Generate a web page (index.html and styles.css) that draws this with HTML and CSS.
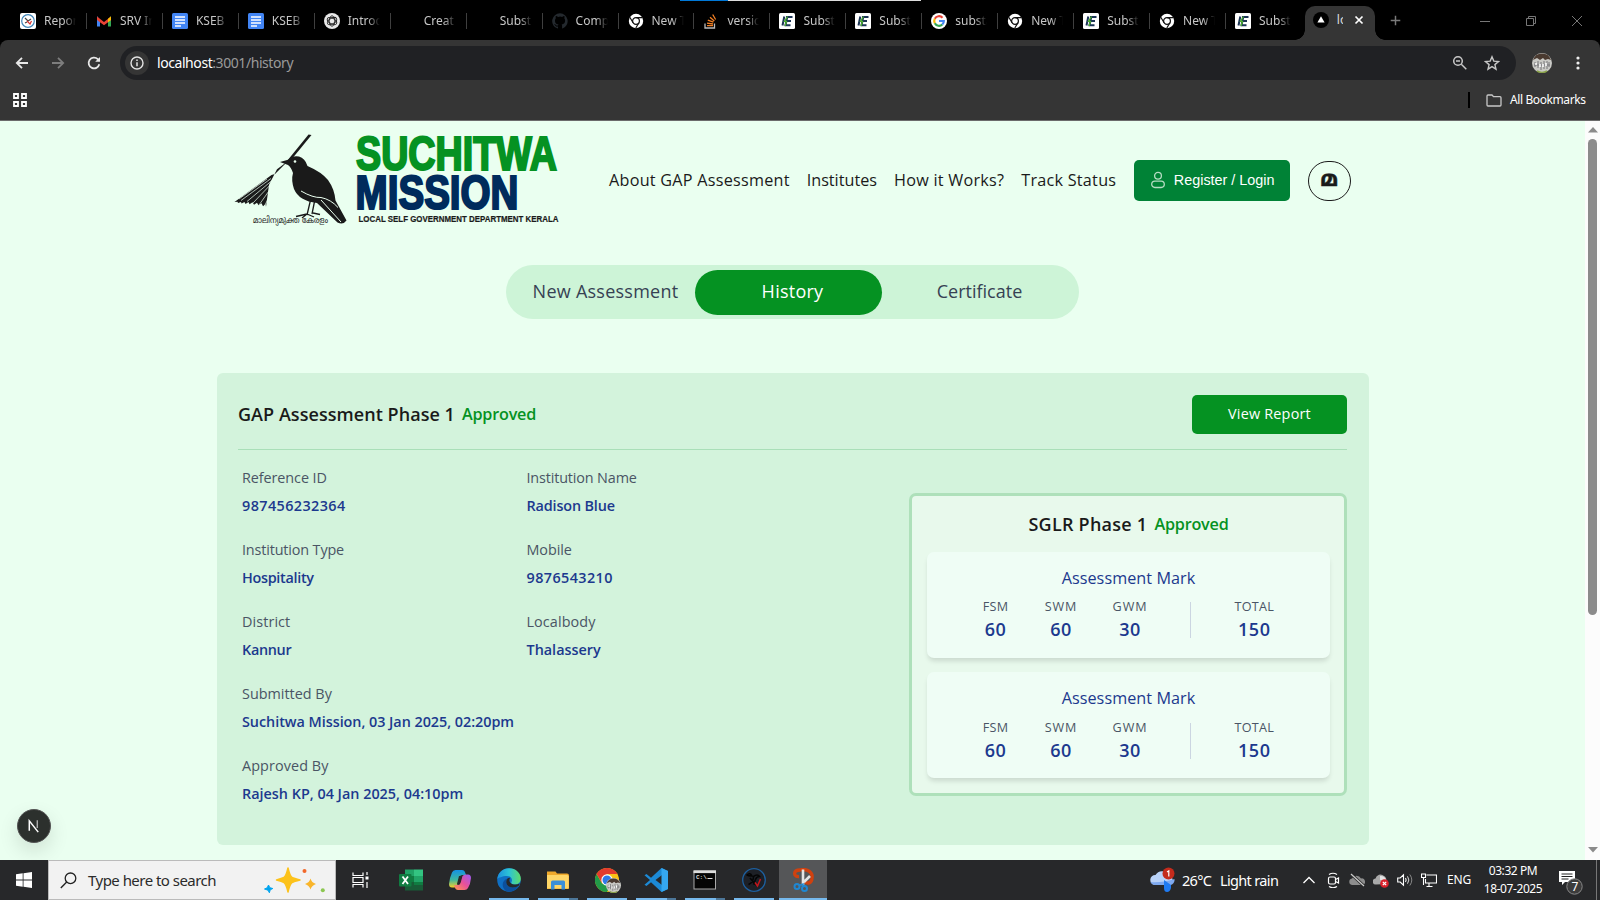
FILE: index.html
```html
<!DOCTYPE html>
<html lang="en">
<head>
<meta charset="utf-8">
<title>GAP Assessment History</title>
<link rel="stylesheet" href="styles.css">
</head>
<body>
<svg class="defs" width="0" height="0">
  <symbol id="docs" viewBox="0 0 16 16"><rect width="16" height="16" rx="1.5" fill="#4285f4"/><path d="M3 4h10M3 7h10M3 10h10M3 13h6" stroke="#fff" stroke-width="1.5"/></symbol>
  <symbol id="chrome-mono" viewBox="0 0 16 16"><circle cx="8" cy="8" r="7.2" fill="#fff"/><circle cx="8" cy="8" r="3.4" fill="none" stroke="#111" stroke-width="1.2"/><path d="M8 4.6h6.4M5.1 9.7 1.8 4.3M10.9 9.7 7.8 15" stroke="#111" stroke-width="1.2"/></symbol>
  <symbol id="ie" viewBox="0 0 16 16"><rect width="16" height="16" rx="1.5" fill="#fff"/><path d="M5.300 3.500 3.500 12.500M7 4h6.500M6.800 8h5.200M5.500 12.200h6M8.300 3.500 6.500 12.500" stroke="#1d3557" stroke-width="2" fill="none"/><path d="M8.500 3.500 5.500 8.300h2L6 13" stroke="#4caf2f" stroke-width="1.300" fill="none"/></symbol>
  <symbol id="face" viewBox="0 0 20 20"><circle cx="10" cy="10" r="10" fill="#c9c9c5"/><path d="M1 7a9.500 9.500 0 0 1 18 0l-3-1-3 1-2-2-3 2-3-2z" fill="#4a3a30"/><path d="M3 9v5m3-6v7m3-6v8m3-9v8m3-8v8m2-7v5M2 12h16" stroke="#77777a" stroke-width="1"/><path d="M4 10v2m4-1v3m3-3v3m3-4v3" stroke="#fff" stroke-width="1.500"/><path d="M5 18q5 3 10 0" stroke="#8aa34a" stroke-width="1.500" fill="none"/></symbol>
</svg>

<div class="tabstrip">
  <div class="top-progress"></div>
  <div class="tab"><svg viewBox="0 0 16 16"><rect width="16" height="16" rx="2" fill="#fff"/><circle cx="8" cy="8" r="6.300" fill="none" stroke="#3f84b8" stroke-width="1.200"/><path d="m5 5 3 3 3-2M5 10l2-1" stroke="#444" stroke-width="1.200" fill="none"/><path d="m7 8 3 3 1.500-3" stroke="#d33" stroke-width="1.200" fill="none"/></svg><span>Repor</span></div>
  <div class="tab"><svg viewBox="0 0 16 16"><path d="M1 3v10.500h3V7z" fill="#4285f4"/><path d="M12 7v6.500h3V3z" fill="#34a853"/><path d="M1 3.500 8 9l7-5.500V7l-7 5.300L1 7z" fill="#ea4335"/><path d="M12 5.800 15 3.500V7l-3 2.300z" fill="#fbbc04"/></svg><span>SRV In</span></div>
  <div class="tab"><svg><use href="#docs"/></svg><span>KSEB</span></div>
  <div class="tab"><svg><use href="#docs"/></svg><span>KSEB</span></div>
  <div class="tab"><svg viewBox="0 0 16 16"><circle cx="8" cy="8" r="8" fill="#e8e8e8"/><g fill="none" stroke="#222" stroke-width=".9"><ellipse cx="8" cy="8" rx="2.800" ry="5.200"/><ellipse cx="8" cy="8" rx="2.800" ry="5.200" transform="rotate(60 8 8)"/><ellipse cx="8" cy="8" rx="2.800" ry="5.200" transform="rotate(120 8 8)"/></g></svg><span>Introd</span></div>
  <div class="tab"><i class="no-icon"></i><span>Creat</span></div>
  <div class="tab"><i class="no-icon"></i><span>Subst</span></div>
  <div class="tab"><svg viewBox="0 0 16 16"><path d="M8 .3a7.800 7.800 0 0 0-2.500 15.200c.4 0 .5-.2.5-.4v-1.500c-2.200.5-2.700-1-2.700-1-.4-.9-.9-1.200-.9-1.200-.7-.5.1-.5.1-.5.8.1 1.200.8 1.200.8.7 1.200 1.900.9 2.300.7 0-.6.300-.9.500-1.100C4.700 11.100 3 10.500 3 7.400c0-.9.300-1.600.8-2.100 0-.3-.4-1.100.1-2.200 0 0 .7-.2 2.200.8a7.400 7.400 0 0 1 4 0c1.500-1 2.200-.8 2.200-.8.400 1.100.1 1.900 0 2.200.5.500.8 1.200.8 2.100 0 3-1.700 3.700-3.500 3.900.3.200.5.700.5 1.500v2.200c0 .2.100.5.500.4A7.800 7.800 0 0 0 8 .3z" fill="#24292e"/></svg><span>Comp</span></div>
  <div class="tab"><svg><use href="#chrome-mono"/></svg><span>New T</span></div>
  <div class="tab"><svg viewBox="0 0 16 16"><path d="M2 10.500V15h9.500v-4.500" fill="none" stroke="#bbb" stroke-width="1.300"/><path d="M4 12.700h6M4 10.200l6 .8M4.800 7.200l5.600 1.900M7 4.300l4.300 3.800M9.700 1.500l2.900 5" stroke="#f48024" stroke-width="1.300"/></svg><span>versic</span></div>
  <div class="tab"><svg><use href="#ie"/></svg><span>Subst</span></div>
  <div class="tab"><svg><use href="#ie"/></svg><span>Subst</span></div>
  <div class="tab"><svg viewBox="0 0 16 16"><circle cx="8" cy="8" r="8" fill="#fff"/><g fill="none" stroke-width="2.200"><path d="M11.500 4.700A4.800 4.800 0 0 0 3.800 5.700" stroke="#ea4335"/><path d="M3.800 5.700a4.800 4.800 0 0 0 0 4.600" stroke="#fbbc05"/><path d="M3.800 10.300a4.800 4.800 0 0 0 7.500 1.200" stroke="#34a853"/><path d="M11.300 11.500A4.500 4.500 0 0 0 12.800 8H8" stroke="#4285f4"/></g></svg><span>substa</span></div>
  <div class="tab"><svg><use href="#chrome-mono"/></svg><span>New T</span></div>
  <div class="tab"><svg><use href="#ie"/></svg><span>Subst</span></div>
  <div class="tab"><svg><use href="#chrome-mono"/></svg><span>New T</span></div>
  <div class="tab last"><svg><use href="#ie"/></svg><span>Subst</span></div>
  <div class="tab-active"><svg viewBox="0 0 16 16"><circle cx="8" cy="8" r="8" fill="#000"/><path d="m8 4.300 3.600 6.200H4.400z" fill="#fff"/></svg><span>lo</span><svg class="close" viewBox="0 0 10 10"><path d="m1.500 1.500 7 7m0-7-7 7" stroke="#fff" stroke-width="1.700"/></svg></div>
  <svg class="plus" viewBox="0 0 12 12"><path d="M6 .8v10.400M.8 6h10.400" stroke="#7a7a7a" stroke-width="1.600"/></svg>
  <div class="winctl">
    <svg viewBox="0 0 12 12"><path d="M1 6.500h10" stroke="#777"/></svg>
    <svg viewBox="0 0 12 12"><path d="M1.500 3.500h7v7h-7zM3.500 3.500v-2h7v7h-2" fill="none" stroke="#777"/></svg>
    <svg viewBox="0 0 12 12"><path d="m1 1 10 10M11 1 1 11" stroke="#777"/></svg>
  </div>
</div>

<div class="toolbar">
  <div class="address-row">
    <div class="navbtns">
      <svg viewBox="0 0 16 16"><path d="M14 8H3M8 2.800 2.800 8 8 13.200" fill="none" stroke="#e8e8e8" stroke-width="1.800"/></svg>
      <svg viewBox="0 0 16 16"><path d="M2 8h11M8 2.800 13.200 8 8 13.200" fill="none" stroke="#7d7d7d" stroke-width="1.800"/></svg>
      <svg viewBox="0 0 16 16"><path d="M13.300 9.300a5.400 5.400 0 1 1-1.500-5.200l1.500 1.500" fill="none" stroke="#e8e8e8" stroke-width="1.800"/><path d="M14 2v4.800H9.200z" fill="#e8e8e8"/></svg>
    </div>
    <div class="omnibox">
      <span class="info"><svg viewBox="0 0 14 14"><circle cx="7" cy="7" r="6" fill="none" stroke="#e3e3e3" stroke-width="1.400"/><path d="M7 6.300v4M7 3.500v1.500" stroke="#e3e3e3" stroke-width="1.500"/></svg></span>
      <span class="url"><b>localhost</b>:3001/history</span>
      <span class="omni-icons">
        <svg viewBox="0 0 16 16"><circle cx="6" cy="6" r="4.300" fill="none" stroke="#c7c7c7" stroke-width="1.500"/><path d="m9.300 9.300 5 5M4 6h4" stroke="#c7c7c7" stroke-width="1.500"/></svg>
        <svg viewBox="0 0 16 16"><path d="m8 1.800 1.800 4.300 4.700.4-3.600 3.100 1.100 4.600L8 11.700l-4 2.500 1.100-4.600L1.500 6.500l4.700-.4z" fill="none" stroke="#c7c7c7" stroke-width="1.400"/></svg>
      </span>
    </div>
    <svg class="avatar"><use href="#face"/></svg>
    <svg class="dots" viewBox="0 0 4 16"><g fill="#eee"><circle cx="2" cy="3" r="1.600"/><circle cx="2" cy="8" r="1.600"/><circle cx="2" cy="13" r="1.600"/></g></svg>
  </div>
  <div class="bookmarks">
    <svg class="apps" viewBox="0 0 14 14"><path d="M1 1h4v4H1zM9 1h4v4H9zM1 9h4v4H1zM9 9h4v4H9z" fill="none" stroke="#fff" stroke-width="1.800"/></svg>
    <i class="bm-div"></i>
    <svg class="folder" viewBox="0 0 16 13"><path d="M1 2q0-1 1-1h4l1.500 1.700H14q1 0 1 1V11q0 1-1 1H2q-1 0-1-1z" fill="none" stroke="#c7c7c7" stroke-width="1.300"/></svg>
    <span class="bm-text">All Bookmarks</span>
  </div>
</div>

<div class="viewport">
  <main class="page">
    <header class="site-header">
      <svg class="logo" viewBox="0 0 330 96" role="img">
        <g transform="translate(-1 0)">
        <path d="m75.500 2.500 3 .5-22.500 27.500-2-1.500z" fill="#1a1a1a"/>
        <path d="M55 29 42 42 38.500 43 1.500 70l3-.2.500 1.200 3-1 .5 1.500 3-1.500 1 2 3-2 1 2.300 3-2 1.500 2.500 3-2 1.500 2.500 3-2 1.500 3 2.500-2 .5 2.500 3-22 8-15.500z" fill="#1a1a1a"/>
        <path d="m8 68.500 30-22M14 69.500l25-21M20 71l21-22M26 73l17-24M31 75l13-26M6 67l28-20" stroke="#ebfff0" stroke-width=".7"/>
        <path d="m47 30 8-2.200q5-4.800 11-3.300 6 1.500 8.500 9.500 14 6 20.500 14 6.500 9 7.500 20.500l11 20q-3 4.500-9 2L84 71q-18-2-23-14-3-9-1-16-2-6-5-8z" fill="#1a1a1a"/>
        <circle cx="62" cy="29.500" r="1.300" fill="#ebfff0"/>
        <path d="M68 59q12 7 20 6.500 10 2 17 10M88 68l20 22" stroke="#ebfff0" fill="none" stroke-width="1"/>
        <path d="m78 66-4 17m8-16-3 15M74 82l-11 2.500m11-2.500-5 4m5-4 7 3m-1-4 7 1.500" stroke="#1a1a1a" stroke-width="1.300" fill="none"/>
        </g>
        <text class="logo-ml" x="19" y="91" textLength="75" lengthAdjust="spacingAndGlyphs">മാലിന്യമുക്ത കേരളം</text>
        <text class="logo-a" x="122" y="37.500" textLength="201" lengthAdjust="spacingAndGlyphs">SUCHITWA</text>
        <text class="logo-b" x="121.500" y="76.500" textLength="163" lengthAdjust="spacingAndGlyphs">MISSION</text>
        <text class="logo-c" x="124.500" y="89.500" textLength="200" lengthAdjust="spacingAndGlyphs">LOCAL SELF GOVERNMENT DEPARTMENT KERALA</text>
      </svg>
      <nav class="menu">
        <a class="p3">About GAP Assessment</a><a>Institutes</a><a class="p3">How it Works?</a><a class="p3">Track Status</a>
      </nav>
      <button class="login"><svg viewBox="0 0 16 18"><circle cx="8" cy="4.800" r="3.400" fill="none" stroke="#b5dcc2" stroke-width="1.300"/><rect x="1.700" y="10.200" width="12.600" height="6.300" rx="3.200" fill="none" stroke="#b5dcc2" stroke-width="1.300"/></svg><span>Register / Login</span></button>
      <button class="lang">മ</button>
    </header>
    <div class="switcher">
      <span class="p3">New Assessment</span><span class="on p3">History</span><span>Certificate</span>
    </div>
    <section class="card">
      <div class="card-head">
        <h2>GAP Assessment Phase 1</h2><em>Approved</em>
        <button class="view">View Report</button>
      </div>
      <div class="card-body">
        <dl class="fields">
          <div><dt class="n1">Reference ID</dt><dd class="p4">987456232364</dd></div>
          <div><dt class="n2">Institution Name</dt><dd class="n2">Radison Blue</dd></div>
          <div><dt class="n2">Institution Type</dt><dd class="n3">Hospitality</dd></div>
          <div><dt class="n1">Mobile</dt><dd class="p4">9876543210</dd></div>
          <div><dt class="p1">District</dt><dd class="n3">Kannur</dd></div>
          <div><dt class="p1">Localbody</dt><dd>Thalassery</dd></div>
          <div class="wide"><dt>Submitted By</dt><dd class="n0">Suchitwa Mission, 03 Jan 2025, 02:20pm</dd></div>
          <div class="wide"><dt class="p1">Approved By</dt><dd>Rajesh KP, 04 Jan 2025, 04:10pm</dd></div>
        </dl>
        <aside class="sglr">
          <div class="sglr-head"><h3 class="p3">SGLR Phase 1</h3><em>Approved</em></div>
          <div class="marks">
            <h4>Assessment Mark</h4>
            <div class="scores"><p class="fsm"><small>FSM</small><b>60</b></p><p class="swm"><small>SWM</small><b>60</b></p><p class="gwm"><small>GWM</small><b>30</b></p><i></i><p class="total"><small>TOTAL</small><b>150</b></p></div>
          </div>
          <div class="marks second">
            <h4>Assessment Mark</h4>
            <div class="scores"><p class="fsm"><small>FSM</small><b>60</b></p><p class="swm"><small>SWM</small><b>60</b></p><p class="gwm"><small>GWM</small><b>30</b></p><i></i><p class="total"><small>TOTAL</small><b>150</b></p></div>
          </div>
        </aside>
      </div>
    </section>
    <div class="next-badge"><svg viewBox="0 0 34 34"><path d="M12 22V11.500l9.500 12" stroke="#fff" stroke-width="1.600" fill="none"/><path d="M20.500 11v8" stroke="#aaa" stroke-width="1.500"/></svg></div>
  </main>
  <div class="scrollbar"><svg viewBox="0 0 10 6"><path d="m5 0 5 5.500H0z"/></svg><i></i><svg class="down" viewBox="0 0 10 6"><path d="m5 5.500 5-5.500H0z"/></svg></div>
</div>

<div class="taskbar">
  <div class="start"><svg viewBox="0 0 16 16" fill="#fff"><path d="M0 2.200 6.700 1.300v6.300H0zM7.500 1.200 16 0v7.600H7.500zM0 8.400h6.700v6.300L0 13.800zM7.500 8.400H16V16l-8.500-1.200z"/></svg></div>
  <div class="search">
    <svg class="mag" viewBox="0 0 17 17"><circle cx="10.500" cy="6.300" r="5.300" fill="none" stroke="#222" stroke-width="1.300"/><path d="M6.700 10.100.8 16" stroke="#222" stroke-width="1.400"/></svg>
    <span>Type here to search</span>
    <svg class="spark" viewBox="0 0 62 26"><path d="M24 1q2 8.500 4 9.500t8 2.500q-6 1.500-8 2.500T24 25q-2-8.500-4-9.500T12.500 13q5.500-1.500 7.500-2.500T24 1z" fill="#fcc21b" stroke="#fcc21b" stroke-width="1.500" stroke-linejoin="round"/><path d="M46.500 11.500q1 4 5.500 5.500-4.500 1.500-5.500 5.500-1-4-5.500-5.500 4.500-1.500 5.500-5.500z" fill="#f9b52b"/><path d="m4.500 18 1.300 2.700 3 .8-2.600 1.300-.8 3-1.400-2.600L.5 22l2.700-1.200z" fill="#00a4ef" stroke="#00a4ef"/><circle cx="40.500" cy="4" r="2" fill="#f2682a"/><circle cx="58.800" cy="23.300" r="2" fill="#8cc751"/></svg>
  </div>
  <div class="app nob"><svg viewBox="0 0 24 24"><path d="M4 4.500v3h10v-3M4 19.500v-3h10v3M4 9.500h10v5H4zM18 4v3M18 14v6" fill="none" stroke="#fff" stroke-width="1.200"/><path d="M16.500 8.500h3v3h-3z" fill="#fff"/></svg></div>
  <div class="app nob first"><svg viewBox="0 0 24 24"><path d="M6 1.500h9V9H6z" fill="#21a366"/><path d="M15 1.500h9V9h-9z" fill="#33c481"/><path d="M6 8h9v8H6z" fill="#107c41"/><path d="M15 8h9v6h-9z" fill="#21a366"/><path d="M6 14h18v8.500H6z" fill="#185c37"/><path d="M15 14h9v3h-9z" fill="#107c41"/><rect y="6" width="12.500" height="12.500" rx="1" fill="#107c41"/><path d="m3.500 8.500 5.500 7.500M9 8.500 3.500 16" stroke="#fff" stroke-width="1.800"/></svg></div>
  <div class="app nob"><svg viewBox="0 0 24 24"><defs><linearGradient id="c1" x1="0" y1="0" x2="0" y2="1"><stop stop-color="#1391e6"/><stop offset=".55" stop-color="#3cb7a0"/><stop offset="1" stop-color="#f5d02a"/></linearGradient><linearGradient id="c2" x1="1" y1="0" x2="0" y2="1"><stop stop-color="#9a5cf5"/><stop offset=".5" stop-color="#e8509a"/><stop offset="1" stop-color="#ff9a4d"/></linearGradient></defs><path d="M7.500 2H14q2.500 0 3.300 3l.7 2h-4q-2 0-2.700 2.500L9.500 16q-1 3.500-3.500 3.500H4Q1 19.500 1 16q.5-6 3-11.500Q5 2 7.500 2z" fill="url(#c1)"/><path d="M16.500 22H10q-2.500 0-3.300-3L6 17h4q2 0 2.700-2.500L14.500 8q1-1.500 3.500-1.500h2q3 0 3 3.500-.5 6-3 10-1 2-3.500 2z" fill="url(#c2)"/><path d="m11 8-2 8h2.500l2.500-8z" fill="#2a2a2a"/></svg></div>
  <div class="app"><svg viewBox="0 0 24 24"><defs><linearGradient id="e1"><stop stop-color="#1b8fdd"/><stop offset=".5" stop-color="#2cc3d6"/><stop offset="1" stop-color="#5fdc6a"/></linearGradient></defs><circle cx="12" cy="12" r="11.800" fill="#0f6fc4"/><path d="M.3 11C1 4.500 6 .2 12 .2c7 0 11.800 5 11.800 10.300 0 4-3 6-6 6-2.500 0-4-1-3.500-2 2-3-.5-6.500-4.500-6.500C5 8 1.500 10 .3 11z" fill="url(#e1)"/><path d="M8.500 22.700C4 19 5 12 10.500 10.500c-3 3.500-.5 9 5 9 2.500 0 4.500-.7 6.500-2-2.500 5-8 7.500-13.500 5.200z" fill="#0c4f9c"/><path d="M22 17.500c-1.500 1-4 2-6.500 2-5.500 0-8-5.500-5-9 .8-.6 2-.8 2.500-.5-1.500 3 0 6 4 6.500 2 .3 4 0 5.700-1z" fill="#27282a"/></svg></div>
  <div class="app multi"><svg viewBox="0 0 24 24"><path d="M1 3.500h8.500l1.500 2H21q2 0 2 2V20q0 1-1 1H1z" fill="#f0a92b"/><path d="M1 7h20q1.700 0 1.700 1.500V20.500H1z" fill="#ffd667"/><path d="M5 21.500V14q0-1.500 1.500-1.500h11Q19 12.500 19 14v7.500h-3.500v-4.500h-7v4.500z" fill="#3b8fd8"/></svg></div>
  <div class="app"><svg viewBox="0 0 24 24"><circle cx="12" cy="12" r="12" fill="#fbc116"/><path d="M1.600 6A12 12 0 0 0 12 24l5-9-10 .5z" fill="#229a48"/><path d="M1.600 6 7 15l5-9h10.400A12 12 0 0 0 1.600 6z" fill="#e33b2e"/><circle cx="12" cy="12" r="5.700" fill="#fff"/><circle cx="12" cy="12" r="4.500" fill="#2f79e8"/></svg><svg class="mini" viewBox="0 0 20 20"><use href="#face" width="20" height="20"/></svg></div>
  <div class="app multi"><svg viewBox="0 0 24 24"><path d="m17.500 0 6.500 3v18l-6.500 3L7 14.200 2.500 18 .5 16.800 6 12 .5 7.200 2.500 6 7 9.800zM18 7l-6.500 5 6.500 5z" fill="#1c8ad6" fill-rule="evenodd"/><path d="m17.500 0 6.500 3v18l-6.500 3z" fill="#35a7f0"/></svg></div>
  <div class="app multi"><svg viewBox="0 0 24 24"><rect x="1" y="2.500" width="21.500" height="18.500" fill="#050505" stroke="#aaa"/><path d="M.500 4H23" stroke="#ddd" stroke-width="2.200"/><text class="cmd" x="3" y="11">C:\</text><path d="M14.500 10.500h5" stroke="#ddd"/></svg></div>
  <div class="app"><svg viewBox="0 0 24 24"><circle cx="12" cy="12" r="11.300" fill="#1d2026" stroke="#1d5f9e" stroke-width="1.300"/><path d="M5 7q3-3 5 1-4 0-5-1zM6.500 16.500q5-2 5-8 4-3 6 0-3 0-4 3l-2 5M8 10l6 7" stroke="#050505" stroke-width="1.600" fill="none"/><path d="m13 14.500 2.500 3.500 3-7" stroke="#c4161c" stroke-width="1.500" fill="none"/></svg></div>
  <div class="app current"><svg viewBox="0 0 24 24"><path d="M8 8.500C2 9 2 2 9 2c8-2 13 3 12 8 0 5-4 6-7 4" fill="none" stroke="#d0410f" stroke-width="3.300"/><path d="M12 1.500v16M13 14l6-6" stroke="#e4e4e4" stroke-width="2.600"/><circle cx="6" cy="18.500" r="2.500" fill="none" stroke="#1f87d2" stroke-width="2"/><circle cx="13.500" cy="20.500" r="2.500" fill="none" stroke="#1f87d2" stroke-width="2"/><path d="m8 17.500 4-1.500v3" fill="none" stroke="#1f87d2" stroke-width="1.500"/></svg></div>
  <div class="tray">
    <svg class="weather" viewBox="0 0 26 26"><path d="M5 18a5 5 0 0 1 .5-10A7.500 7.500 0 0 1 19 9a4.800 4.800 0 0 1 1 9z" fill="#b9d2f8"/><path d="M5 18a5 5 0 0 1-4.500-3q11 1 24-3a5 5 0 0 1-4.500 6z" fill="#7ea9ef"/><path d="m14 13 7 5v3q-1 4-4 4t-3-4z" fill="#1f7bf2"/><circle cx="18.500" cy="6.500" r="6" fill="#c42b1c"/><path d="M17 5l1.800-1.200V9.500" stroke="#fff" fill="none" stroke-width="1.200"/></svg>
    <span class="temp">26°C</span><span class="cond">Light rain</span>
    <svg viewBox="0 0 16 16"><path d="m2.500 11 5.500-5.500 5.500 5.500" stroke="#fff" fill="none" stroke-width="1.300"/></svg>
    <svg viewBox="0 0 16 16"><rect x="3.500" y="5" width="7" height="7" rx="1.500" fill="none" stroke="#fff" stroke-width="1.200"/><path d="m10.500 7.500 3-1.500v5l-3-1.500M4 2.500q4-2.500 8 0M4 14.500q4 2.500 8 0" fill="none" stroke="#fff" stroke-width="1.200"/></svg>
    <svg viewBox="0 0 16 16"><path d="M3 13a3.300 3.300 0 0 1 0-6.500A5 5 0 0 1 12 6.500a3.300 3.300 0 0 1 1.500 6.500z" fill="#8d8d8d"/><path d="m2 2 13 12" stroke="#2a2a2a" stroke-width="3"/><path d="m2 2 13 12" stroke="#ccc" stroke-width="1.200"/></svg>
    <svg viewBox="0 0 16 16"><path d="M3 12.500a3 3 0 0 1-.5-6A5 5 0 0 1 11 4q3 1 2.500 8z" fill="#a9a9a9"/><path d="M7 4a5 5 0 0 1 6 5L7 8z" fill="#e4e4e4"/><circle cx="11.500" cy="11.500" r="4.300" fill="#d8202a"/><path d="m9.800 9.800 3.400 3.400m0-3.400-3.400 3.400" stroke="#fff" stroke-width="1.200"/></svg>
    <svg viewBox="0 0 16 16"><path d="M.7 6h2.500L6.500 2.800v10.400L3.200 10H.7zM8.500 6q1.300 2 0 4" fill="none" stroke="#fff" stroke-width="1.100"/><path d="M10.500 4.300q2.700 3.700 0 7.400" fill="none" stroke="#ddd"/><path d="M12.800 2.500q4 5.500 0 11" fill="none" stroke="#888"/></svg>
    <svg viewBox="0 0 16 16"><path d="M5.500 3h10v8h-11V7M8 11v3m-2.500.5h6M.5 2h4v3.500h-4zM2.500 5.500V13" fill="none" stroke="#fff" stroke-width="1.100"/></svg>
    <span class="eng">ENG</span>
    <span class="clock"><span>03:32 PM</span><span>18-07-2025</span></span>
    <svg class="notif" viewBox="0 0 26 26"><path d="M1 2h16v11H7l-3 3v-3H1z" fill="#fff"/><path d="M3.500 5h11M3.500 7.500h11M3.500 10h7" stroke="#222"/><circle cx="16.500" cy="17.500" r="7.700" fill="#3c3c3c" stroke="#888"/><text class="seven" x="13.500" y="21.500">7</text></svg>
    <i class="desk"></i>
  </div>
</div>
</body>
</html>
```
FILE: styles.css
```css
* { box-sizing: border-box; margin: 0; padding: 0; }
body { width: 1600px; height: 900px; overflow: hidden; display: flex; flex-direction: column; font-family: "Open Sans", "Noto Sans", sans-serif; background: #000; }
svg { display: block; flex: none; }
button { border: 0; }
.defs { position: absolute; }

/* letter-spacing steps */
.n3 { letter-spacing: -.3px; }
.n2 { letter-spacing: -.15px; }
.n1 { letter-spacing: -.08px; }
.n0 { letter-spacing: -.04px; }
.p1 { letter-spacing: .09px; }
.p3 { letter-spacing: .25px; }
.p4 { letter-spacing: .4px; }

/* browser chrome */
.tabstrip { height: 40px; flex: none; display: flex; align-items: center; padding: 1px 0 0 11px; background: #000; position: relative; }
.top-progress { position: absolute; left: 680px; top: 0; width: 241px; height: 1px; background: linear-gradient(90deg, #0078d7 48px, #dedede 48px); }
.tab { width: 75.95px; height: 16px; flex: none; display: flex; align-items: center; padding-left: 9px; border-right: 1.5px solid #3f3f3f; }
.tab.last { border-color: transparent; width: 76.8px; }
.tab svg, .tab .no-icon { width: 16px; height: 16px; flex: none; }
.tab span { margin-left: 8px; width: 32px; font: 12px/16px "Noto Sans", sans-serif; color: #c6c6c6; overflow: hidden; white-space: nowrap; -webkit-mask: linear-gradient(90deg, #000 62%, transparent); mask: linear-gradient(90deg, #000 62%, transparent); }
.tab-active { width: 70px; height: 34px; margin: 5px 0 0 2px; flex: none; display: flex; align-items: center; padding: 0 0 6px 8px; border-radius: 10px 10px 0 0; background: #353535; position: relative; }
.tab-active::before, .tab-active::after { content: ""; position: absolute; bottom: 0; width: 10px; height: 10px; }
.tab-active::before { left: -10px; background: radial-gradient(circle at 0 0, transparent 9.5px, #353535 10px); }
.tab-active::after { right: -10px; background: radial-gradient(circle at 100% 0, transparent 9.5px, #353535 10px); }
.tab-active svg { width: 16px; height: 16px; }
.tab-active span { margin-left: 8px; width: 6px; overflow: hidden; font: 12px/16px "Noto Sans", sans-serif; color: #ddd; }
.tab-active .close { width: 10px; height: 10px; margin-left: 11px; }
.plus { width: 11px; height: 11px; margin-left: 15px; }
.winctl { margin-left: auto; display: flex; gap: 34px; padding-right: 17px; }
.winctl svg { width: 12px; height: 12px; }
.toolbar { height: 81px; flex: none; background: #353535; border-bottom: 1px solid #6b6b6b; border-radius: 8px 8px 0 0; padding-top: 6px; }
.address-row { height: 34px; display: flex; align-items: center; padding-left: 14px; }
.navbtns { display: flex; gap: 20px; width: 106px; }
.navbtns svg { width: 16px; height: 16px; }
.omnibox { width: 1396px; height: 34px; border-radius: 17px; background: #202124; display: flex; align-items: center; padding: 0 16px 0 5px; }
.info { width: 24px; height: 24px; border-radius: 50%; background: #353535; display: grid; place-items: center; }
.info svg { width: 14px; height: 14px; }
.url { margin-left: 8px; font: 14px/20px "Noto Sans", sans-serif; color: #9a9a9a; letter-spacing: -.43px; }
.url b { font-weight: 400; color: #fff; }
.omni-icons { margin-left: auto; display: flex; gap: 16px; }
.omni-icons svg { width: 16px; height: 16px; }
.avatar { width: 20px; height: 20px; margin-left: 16px; }
.dots { width: 4px; height: 16px; margin-left: 24px; }
.bookmarks { height: 40px; display: flex; align-items: center; padding-left: 13px; }
.apps { width: 14px; height: 14px; }
.bm-div { width: 2px; height: 16px; background: #000; margin-left: 1441px; }
.folder { width: 16px; height: 13px; margin-left: 16px; }
.bm-text { margin-left: 8px; font: 12px/16px "Noto Sans", sans-serif; color: #fff; white-space: nowrap; letter-spacing: -.4px; }

/* page */
.viewport { height: 739px; flex: none; display: flex; }
.page { width: 1585px; background: #eafff0; position: relative; overflow: hidden; }
.scrollbar { width: 15px; background: #fcfcfc; display: flex; flex-direction: column; align-items: center; padding: 6px 0 7px; }
.scrollbar svg { width: 10px; height: 6px; fill: #8b8b8b; }
.scrollbar i { width: 9px; height: 476px; margin-top: 6px; border-radius: 5px; background: #8b8b8b; }
.scrollbar .down { margin-top: auto; }
.site-header { height: 120px; display: flex; align-items: center; padding: 0 0 1px 234px; }
.logo { width: 330px; height: 96px; margin-top: -2px; }
.logo text { font-family: "Liberation Sans", Arial, sans-serif; font-weight: 700; }
.logo .logo-a { font-size: 47.5px; fill: #059222; stroke: #059222; stroke-width: 2.2px; }
.logo .logo-b { font-size: 47.5px; fill: #002b5c; stroke: #002b5c; stroke-width: 2.2px; }
.logo .logo-c { font-size: 9px; fill: #1a1a1a; stroke: #1a1a1a; stroke-width: .2px; }
.logo .logo-ml { font-family: "Noto Sans Malayalam", "Noto Sans", sans-serif; font-size: 9px; font-weight: 400; fill: #1a1a1a; }
.menu { display: flex; gap: 17px; margin-left: 45px; font-size: 16.2px; line-height: 24px; color: #1a1a1a; white-space: nowrap; padding-bottom: 1px; }
.login { width: 156px; height: 41px; margin-left: 17.5px; border-radius: 5px; background: #008236; color: #fff; display: flex; align-items: center; padding: 0 0 1px 16px; font: 14.4px/20px "Liberation Sans", Arial, sans-serif; white-space: nowrap; }
.login svg { width: 16px; height: 18px; margin-right: 8px; }
.lang { width: 43px; height: 40px; margin-left: 18px; border: 1px solid #1a1a1a; border-radius: 20px; background: none; font: 700 22px/36px "Noto Sans Malayalam", sans-serif; color: #1a1a1a; -webkit-text-stroke: .5px #1a1a1a; }
.switcher { width: 573px; height: 54px; margin: 24px 0 0 506px; border-radius: 27px; background: #cdf4d7; display: grid; grid-template-columns: repeat(3, 187px); padding: 5px 6px 4px; }
.switcher span { height: 45px; line-height: 43px; text-align: center; font-size: 18px; color: #364153; border-radius: 23px; }
.switcher .on { margin: 0 4px 0 -4px; padding-left: 8px; background: #059222; color: #fff; }
.card { width: 1152px; height: 472px; margin: 54px 0 0 217px; border-radius: 6px; background: #d3f3dc; padding: 22px 22px 0 21px; }
.card-head { height: 55px; display: flex; border-bottom: 1px solid #a9dfb8; align-items: flex-start; line-height: 39px; }
.card-head h2, .sglr h3 { font-size: 18px; font-weight: 600; color: #1a1a1a; white-space: nowrap; }
.card-head h2 { letter-spacing: .05px; }
em { font-style: normal; font-size: 16.2px; font-weight: 600; color: #059222; margin-left: 7px; letter-spacing: -.2px; }
.view { width: 155px; height: 39px; margin-left: auto; border-radius: 5px; background: #059222; color: #fff; font: 500 14.4px/36px "Open Sans", sans-serif; letter-spacing: .2px; padding-bottom: 1px; }
.card-body { display: flex; justify-content: space-between; }
.fields { padding: 18px 0 0 4px; display: grid; grid-template-columns: 284.5px 200px; grid-auto-rows: 72px; align-content: start; font-size: 14.4px; line-height: 20px; white-space: nowrap; }
.wide { grid-column: 1 / 3; }
dt { color: #4a5565; }
dd { margin-top: 8px; color: #1c398e; font-weight: 600; }
.sglr { width: 438px; height: 303px; margin-top: 43px; border: 3px solid #aee0ba; border-radius: 7px; background: #e8f9ec; padding: 14px 14px 0 15px; }
.sglr-head { display: flex; justify-content: center; line-height: 28px; }
.marks { height: 106px; margin-top: 14px; border-radius: 7px; background: #effdf5; box-shadow: 0 4px 5px -1px rgba(0,0,0,.13); padding-top: 14px; }
.marks h4 { text-align: center; font-size: 16.2px; line-height: 24px; font-weight: 400; color: #1c398e; letter-spacing: .06px; }
.scores { display: flex; align-items: flex-start; padding: 8px 0 0 56px; }
.second .scores { padding-top: 9px; }
.scores p { display: flex; flex-direction: column; align-items: center; white-space: nowrap; }
.scores .fsm { width: 25px; margin-right: 37px; }
.scores .swm { width: 32px; margin-right: 36px; }
.scores .gwm { width: 34px; margin-right: 43px; }
.scores .total { width: 38.5px; margin-left: 44px; }
.scores small { font-size: 12.6px; line-height: 18px; color: #4a5565; letter-spacing: .3px; }
.swm small, .gwm small { letter-spacing: .9px; }
.scores b { font-size: 18px; line-height: 24px; font-weight: 600; color: #1c398e; margin-top: 1px; letter-spacing: .5px; }
.scores i { width: 1px; height: 36px; margin-top: 4px; background: #cbd5e1; }
.next-badge { position: absolute; left: 17px; top: 688px; width: 34px; height: 34px; border-radius: 50%; background: #2c302d; border: 1px solid #555; box-shadow: 0 8px 20px rgba(0,0,0,.12); }

/* taskbar */
.taskbar { height: 40px; flex: none; background: #27282a; display: flex; position: relative; }
.start { width: 48px; padding: 12px 16px; }
.start svg { width: 16px; height: 16px; }
.search { width: 288px; background: #f2f2f2; border: 1px solid #bbb; display: flex; align-items: center; color: #2b2b2b; }
.search .mag { width: 17px; height: 17px; margin-left: 11px; }
.search span { font: 15px/20px "Noto Sans", sans-serif; margin-left: 11px; white-space: nowrap; letter-spacing: -.53px; }
.search .spark { width: 62px; height: 26px; margin-left: auto; margin-right: 9px; }
.app { width: 48px; margin-left: 1px; display: grid; place-items: center; padding-bottom: 1px; position: relative; }
.app.first { margin-left: 2px; }
.app > svg { width: 24px; height: 24px; }
.app .mini { position: absolute; width: 15px; height: 15px; left: 23px; top: 18px; }
.app::after { content: ""; position: absolute; left: 4px; bottom: 0; width: 40px; height: 2px; background: #76b9ed; }
.app.multi::after { background: linear-gradient(90deg, #76b9ed 31px, #4d7799 31px); }
.app.nob::after { display: none; }
.app.current { margin-left: 1px; background: #555658; }
.app.current::after { left: 0; width: 48px; }
.cmd { font: 700 6px "Liberation Mono", monospace; fill: #ddd; }
.tray { margin-left: auto; width: 450px; display: flex; align-items: center; color: #fff; height: 40px; }
.tray > svg { width: 16px; height: 16px; margin-right: 8px; }
.tray .weather { width: 26px; height: 26px; margin-right: 6px; }
.temp, .cond { font: 14.5px/20px "Noto Sans", sans-serif; white-space: nowrap; letter-spacing: -.7px; }
.temp { width: 38px; }
.cond { width: 81px; letter-spacing: -.65px; }
.eng { width: 37px; margin-left: 2px; font: 12px/16px "Noto Sans", sans-serif; letter-spacing: -.2px; }
.clock { width: 58px; display: flex; flex-direction: column; align-items: center; font: 12px/18px "Noto Sans", sans-serif; white-space: nowrap; letter-spacing: -.42px; }
.tray .notif { width: 26px; height: 26px; margin: 4px 0 0 16px; }
.seven { font: 12px "Noto Sans", sans-serif; fill: #fff; }
.desk { width: 1px; height: 40px; background: #777; margin-left: 12px; }
```
